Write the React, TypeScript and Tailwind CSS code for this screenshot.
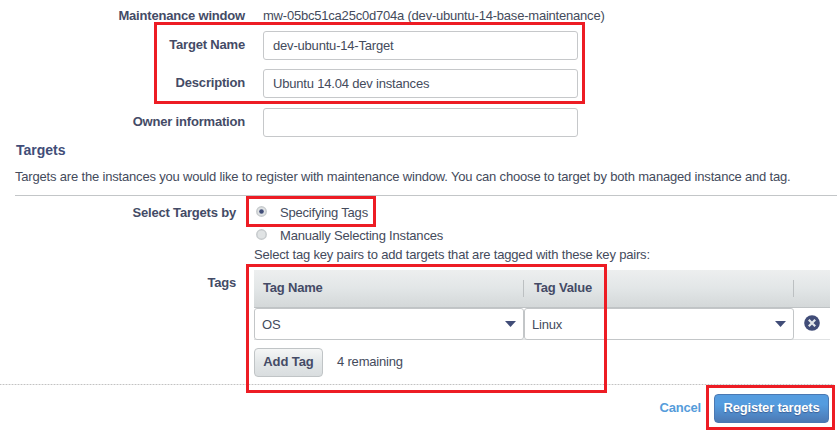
import React from "react";

function Label({ children, className = "" }: { children?: React.ReactNode; className?: string }) {
  return <div className={`shrink-0 text-right font-bold text-[#444b66] ${className}`}>{children}</div>;
}

function Field({ label, value, className = "" }: { label: string; value?: string; className?: string }) {
  return (
    <div className={`flex h-[29px] ${className}`}>
      <Label className="w-[245px] leading-[27px]">{label}</Label>
      <div className="ml-[18px] h-[29px] w-[315px] rounded-[3px] border border-[#c6c8ca] bg-white pl-[9px] leading-[28px]">
        {value}
      </div>
    </div>
  );
}

function Radio({ label, checked = false }: { label: string; checked?: boolean }) {
  return (
    <div className="flex h-[23px] items-center">
      <svg className="mb-[3px] ml-[2px]" width="11" height="11" viewBox="0 0 11 11">
        <circle cx="5.5" cy="5.5" r="4.7" fill="#e0e3e4" stroke="#c6cacc" strokeWidth="1.5" />
        {checked && <circle cx="5.5" cy="5.5" r="2.3" fill="#414d78" />}
      </svg>
      <span className="ml-[13px]">{label}</span>
    </div>
  );
}

function TagSelect({ value }: { value: string }) {
  return (
    <div className="flex h-[32px] w-[270px] items-center justify-between rounded-[3px] border border-[#c3c6c8] bg-white pr-[7px] pl-[7px]">
      <span className="pt-px">{value}</span>
      <svg width="11" height="6" viewBox="0 0 11 6">
        <path d="M0 0H11L5.5 6Z" fill="#414d78" />
      </svg>
    </div>
  );
}

function Highlight({ className }: { className: string }) {
  return <div className={`pointer-events-none absolute border-3 border-[#ed1c24] ${className}`} />;
}

export default function App() {
  return (
    <div className="relative flex h-[433px] w-[837px] flex-col overflow-hidden bg-white font-['Liberation_Sans',Arial,sans-serif] text-[13px] tracking-[-0.19px] whitespace-nowrap text-[#444b5c]">
      <div className="flex h-[31px] leading-[31px]">
        <Label className="w-[245px]">Maintenance window</Label>
        <div className="ml-[18px] tracking-[-0.21px]">mw-05bc51ca25c0d704a (dev-ubuntu-14-base-maintenance)</div>
      </div>
      <Field label="Target Name" value="dev-ubuntu-14-Target" />
      <Field label="Description" value="Ubuntu 14.04 dev instances" className="mt-[9px]" />
      <Field label="Owner information" className="mt-[10px]" />

      <h2 className="mt-[3px] ml-4 h-[20px] text-[14px] leading-[20px] font-bold tracking-normal text-[#414d78]">
        Targets
      </h2>
      <p className="mt-[7px] ml-[15px] h-[20px] leading-[20px] tracking-[-0.18px]">
        Targets are the instances you would like to register with maintenance window. You can choose to target by both
        managed instance and tag.
      </p>
      <div className="mt-[8px] ml-[15px] h-px bg-[#c3c6c8]" />

      <div className="mt-[5px] flex">
        <div className="flex w-[236px] shrink-0 flex-col">
          <Label className="leading-[23px]">Select Targets by</Label>
          <Label className="mt-[47px] leading-[23px]">Tags</Label>
        </div>
        <div className="ml-[18px] w-[576px]">
          <Radio label="Specifying Tags" checked />
          <Radio label="Manually Selecting Instances" />
          <div className="h-[23px] leading-[15px] tracking-[-0.18px]">
            Select tag key pairs to add targets that are tagged with these key pairs:
          </div>
          <div className="flex h-[38px] items-center border-b border-[#bfc3c5] bg-linear-to-b from-[#edefef] via-[#e2e6e7] to-[#d4d8d9] font-bold text-[#444b66]">
            <div className="h-[17px] w-[270px] border-r border-[#bcc0c2] pl-[9px] leading-[16px]">Tag Name</div>
            <div className="h-[17px] w-[270px] border-r border-[#bcc0c2] pl-[10px] leading-[16px]">Tag Value</div>
          </div>
          <div className="flex h-[32px] border-b border-[#e0e2e3]">
            <TagSelect value="OS" />
            <TagSelect value="Linux" />
            <svg className="mt-[7px] ml-[10px]" width="16" height="16" viewBox="0 0 16 16">
              <circle cx="8" cy="8" r="7.8" fill="#414d78" />
              <path d="M4.8 4.8L11.2 11.2M11.2 4.8L4.8 11.2" stroke="#e4e8ea" strokeWidth="2.2" />
            </svg>
          </div>
          <div className="mt-[8px] flex h-[29px]">
            <button className="h-[29px] w-[69px] rounded-[4px] border border-[#c0c4c6] bg-linear-to-b from-[#f5f6f6] via-[#e3e7e8] to-[#d9dddf] pb-px leading-[26px] font-bold tracking-[-0.1px] text-[#444b66]">
              Add Tag
            </button>
            <span className="ml-[14px] leading-[27px]">4 remaining</span>
          </div>
        </div>
      </div>

      <div className="mt-[7px] h-px w-[834px] bg-[repeating-linear-gradient(90deg,#c2c2c2_0px,#c2c2c2_1px,#e6e6e6_1px,#e6e6e6_3px)]" />
      <div className="mt-[9px] flex h-[29px] justify-end pr-2">
        <a className="leading-[27px] font-bold text-[#559cdb]">Cancel</a>
        <button className="ml-[13px] h-[29px] w-[115px] rounded-[4px] border border-[#4a78b2] bg-linear-to-b from-[#559cdf] from-35% to-[#4b79b4] pb-[2px] leading-[25px] font-bold text-white text-shadow-[0_1px_1px_#3b5f96]">
          Register targets
        </button>
      </div>

      <Highlight className="top-[22px] left-[154px] h-[82px] w-[431px]" />
      <Highlight className="top-[196px] left-[246px] h-[31px] w-[130px]" />
      <Highlight className="top-[264px] left-[246px] h-[129px] w-[361px]" />
      <Highlight className="top-[385px] left-[706px] h-[45px] w-[129px]" />
    </div>
  );
}
